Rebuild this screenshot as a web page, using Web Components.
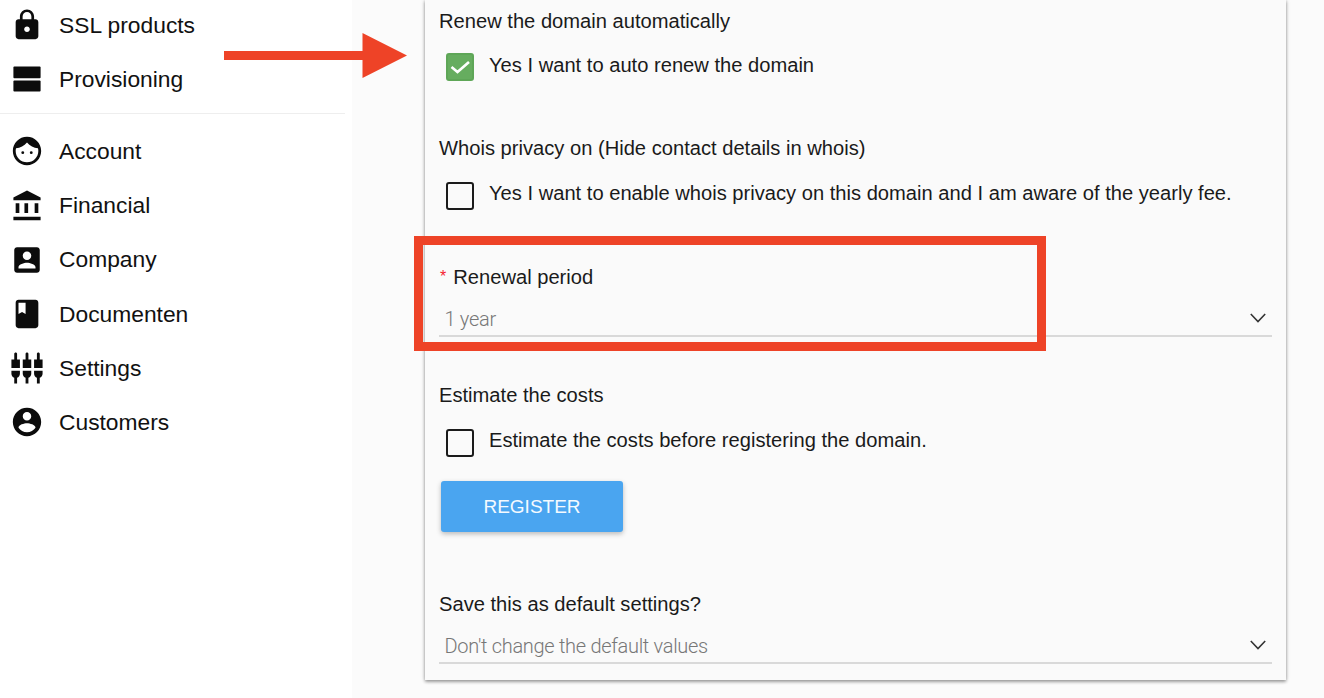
<!doctype html>
<html lang="en">
<head>
<meta charset="utf-8">
<title>Register domain</title>
<style>
  html, body { margin: 0; height: 100%; overflow: hidden; }
  body { background: #fbfbfb; color: #111; font-family: "Liberation Sans", Arial, sans-serif; }
</style>
</head>
<body>
<domain-page>
  <side-nav slot="nav">
    <nav-item icon="lock">SSL products</nav-item>
    <nav-item icon="storage">Provisioning</nav-item>
    <nav-rule></nav-rule>
    <nav-item icon="face">Account</nav-item>
    <nav-item icon="bank">Financial</nav-item>
    <nav-item icon="box">Company</nav-item>
    <nav-item icon="book">Documenten</nav-item>
    <nav-item icon="settings">Settings</nav-item>
    <nav-item icon="circle">Customers</nav-item>
  </side-nav>
  <form-card slot="main">
    <check-field style="--top:9px;--gap:20px;--lift:2px;--after:55px" label="Renew the domain automatically" checked>Yes I want to auto renew the domain</check-field>
    <check-field style="--after:55px" label="Whois privacy on (Hide contact details in whois)">Yes I want to enable whois privacy on this domain and I am aware of the yearly fee.</check-field>
    <select-field style="--after:46px" label="Renewal period" required>1 year</select-field>
    <check-field style="--after:24px" label="Estimate the costs">Estimate the costs before registering the domain.</check-field>
    <raised-button>REGISTER</raised-button>
    <select-field style="--before:60px" label="Save this as default settings?">Don't change the default values</select-field>
  </form-card>
  <note-arrow slot="notes"></note-arrow>
  <note-box slot="notes"></note-box>
</domain-page>

<script>
const ICONS = {
  lock: `<path d="M18 8h-1V6c0-2.76-2.24-5-5-5S7 3.24 7 6v2H6c-1.1 0-2 .9-2 2v10c0 1.1.9 2 2 2h12c1.1 0 2-.9 2-2V10c0-1.1-.9-2-2-2zm-6 9c-1.1 0-2-.9-2-2s.9-2 2-2 2 .9 2 2-.9 2-2 2zm3.1-9H8.9V6c0-1.71 1.39-3.1 3.1-3.1 1.71 0 3.1 1.39 3.1 3.1v2z"/>`,
  storage: `<rect x="2.4" y="3.2" width="19.2" height="8.3" rx=".7"/><rect x="2.4" y="13" width="19.2" height="7.8" rx=".7"/>`,
  face: `<path fill-rule="evenodd" d="M12 2C6.48 2 2 6.48 2 12s4.48 10 10 10 10-4.48 10-10S17.52 2 12 2zm0 18c-4.41 0-8-3.59-8-8 0-.7.09-1.4.27-2 2.9-.2 5.8-1.6 7.73-4 1.93 2.4 4.83 3.8 7.73 4 .18.6.27 1.3.27 2 0 4.41-3.59 8-8 8z"/><circle cx="9" cy="13.2" r="1"/><circle cx="15" cy="13.2" r="1"/>`,
  bank: `<path d="M4 10v7h2.6v-7H4zm6.2 0v7h2.6v-7h-2.6zM2.4 22h19.2v-2.4H2.400zM17.400 10v7H20v-7h-2.600zM12 1 2.400 6v2h19.200V6L12 1z"/>`,
  box: `<path d="M3 5v14c0 1.1.89 2 2 2h14c1.100 0 2-.9 2-2V5c0-1.100-.9-2-2-2H5c-1.110 0-2 .9-2 2zm12 4c0 1.660-1.340 3-3 3s-3-1.340-3-3 1.340-3 3-3 3 1.340 3 3zm-9 8c0-2 4-3.100 6-3.100s6 1.100 6 3.100v1H6v-1z"/>`,
  book: `<path d="M18 2H6c-1.100 0-2 .9-2 2v16c0 1.100.9 2 2 2h12c1.100 0 2-.9 2-2V4c0-1.100-.9-2-2-2zM6 4h5v8l-2.500-1.500L6 12V4z"/>`,
  settings: `<path d="M5 2c0-.55-.45-1-1-1s-1 .45-1 1v4H1v6h6V6H5V2zm4 14c0 1.300.84 2.400 2 2.820V23h2v-4.180c1.160-.41 2-1.510 2-2.820v-2H9v2zm-8 0c0 1.300.84 2.400 2 2.820V23h2v-4.180C6.160 18.400 7 17.300 7 16v-2H1v2zM21 6V2c0-.55-.45-1-1-1s-1 .45-1 1v4h-2v6h6V6h-2zm-8-4c0-.55-.45-1-1-1s-1 .45-1 1v4H9v6h6V6h-2V2zm4 14c0 1.300.84 2.400 2 2.820V23h2v-4.180c1.160-.41 2-1.510 2-2.820v-2h-6v2z"/>`,
  circle: `<path d="M12 2C6.480 2 2 6.480 2 12s4.480 10 10 10 10-4.480 10-10S17.520 2 12 2zm0 3c1.660 0 3 1.340 3 3s-1.340 3-3 3-3-1.340-3-3 1.340-3 3-3zm0 14.200c-2.500 0-4.710-1.280-6-3.220.03-1.990 4-3.080 6-3.080 1.990 0 5.970 1.090 6 3.080-1.290 1.940-3.500 3.220-6 3.220z"/>`,
};

// shorthand so each class below only has to say what is in its shadow root
class ShadowElement extends HTMLElement {
  constructor(html) {
    super();
    const template = document.createElement("template");
    template.innerHTML = html;
    this.attachShadow({ mode: "open" }).appendChild(template.content.cloneNode(true));
  }
}

class DomainPage extends ShadowElement {
  constructor() {
    super(`
      <style>
        :host { display: grid; grid-template-columns: 352px 1fr; height: 698px; position: relative; overflow: hidden; }
        .nav { background: #fff; }
        .main { padding-left: 73px; padding-right: 38px; }
      </style>
      <div class="nav"><slot name="nav"></slot></div>
      <div class="main"><slot name="main"></slot></div>
      <slot name="notes"></slot>
    `);
  }
}

class SideNav extends ShadowElement {
  constructor() {
    super(`
      <style>:host { display: block; margin-top: -2px; }</style>
      <slot></slot>
    `);
  }
}

class NavItem extends ShadowElement {
  constructor() {
    super(`
      <style>
        :host { display: flex; align-items: center; gap: 15.5px; height: 54.2px; padding-left: 9.5px;
                font-size: 22.8px; color: #111; }
        svg { width: 34px; height: 34px; flex: none; fill: #0c0c0c; }
      </style>
      <svg viewBox="0 0 24 24" aria-hidden="true"></svg>
      <span><slot></slot></span>
    `);
  }
  connectedCallback() {
    this.shadowRoot.querySelector("svg").innerHTML = ICONS[this.getAttribute("icon")];
  }
}

class NavRule extends ShadowElement {
  constructor() {
    super(`<style>:host { display: block; width: 345px; height: 1px; background: #eee; margin-top: 7px; margin-bottom: 10px; }</style>`);
  }
}

class FormCard extends ShadowElement {
  constructor() {
    super(`
      <style>
        :host { display: block; box-sizing: border-box; height: 680px; padding: 0 14px;
                background: #fafafa; box-shadow: 0 0 4px rgba(0,0,0,.25), 0 2px 3px rgba(0,0,0,.3); }
      </style>
      <slot></slot>
    `);
  }
}

class CheckField extends ShadowElement {
  constructor() {
    super(`
      <style>
        :host { display: block; padding-top: var(--top, 0); padding-bottom: var(--after, 0);
                font-size: 20.15px; line-height: 24px; color: #1a1a1a; }
        .row { display: flex; align-items: center; gap: 15px; margin-top: var(--gap, 22px); padding-left: 7px; }
        .box { box-sizing: border-box; width: 28px; height: 28px; flex: none; border: 2px solid #1b1b1b;
               border-radius: 3px; }
        :host([checked]) .box { background: #66ad5f; border-color: #5ea657; }
        .box svg { display: none; width: 24px; height: 24px; }
        :host([checked]) .box svg { display: block; }
        .text { position: relative; top: calc(var(--lift, 3px) * -1); }
      </style>
      <div class="label"></div>
      <div class="row">
        <span class="box"><svg viewBox="0 0 24 24"><path d="M3.500 12 9.500 17 21 7" fill="none" stroke="#fff" stroke-width="2.600"/></svg></span>
        <span class="text"><slot></slot></span>
      </div>
    `);
  }
  connectedCallback() {
    this.shadowRoot.querySelector(".label").textContent = this.getAttribute("label");
  }
}

class SelectField extends ShadowElement {
  constructor() {
    super(`
      <style>
        :host { display: block; padding-top: var(--before, 0); padding-bottom: var(--after, 0);
                font-size: 20.15px; line-height: 24px; color: #1a1a1a; }
        .star { display: none; color: #f5222d; font-size: 16px; margin-right: 7px; vertical-align: 2px; margin-left: 1px; }
        :host([required]) .star { display: inline; }
        .control { display: flex; align-items: center; justify-content: space-between; height: 43px;
                   box-sizing: border-box; padding: 9px 6px 0 5.5px; border-bottom: 2px solid #d9d9d9; margin-top: 5px;
                   color: #777; font-family: Roboto, "Liberation Sans", sans-serif; font-weight: 300; font-size: 20px;
                   letter-spacing: -.3px; }
        svg { width: 16px; height: 10px; fill: none; stroke: #333; stroke-width: 1.600; position: relative; top: -1px; }
      </style>
      <div><span class="star">*</span><span class="label"></span></div>
      <div class="control">
        <span><slot></slot></span>
        <svg viewBox="0 0 16 10" aria-hidden="true"><path d="M.8 1 8 8.500 15.200 1"/></svg>
      </div>
    `);
  }
  connectedCallback() {
    this.shadowRoot.querySelector(".label").textContent = this.getAttribute("label");
  }
}

class RaisedButton extends ShadowElement {
  constructor() {
    super(`
      <style>
        :host { display: block; width: 182px; margin-left: 2px; }
        button { display: block; width: 100%; height: 51px; border: 0; border-radius: 3px; padding: 0;
                 background: #4aa5f0; color: #f4faff; font: 19px "Liberation Sans", Arial, sans-serif;
                 box-shadow: 0 2px 5px rgba(0,0,0,.26); }
      </style>
      <button type="button"><slot></slot></button>
    `);
  }
}

class NoteArrow extends ShadowElement {
  constructor() {
    super(`
      <style>
        :host { position: absolute; left: 224px; top: 33px; width: 183px; height: 45px; }
        svg { display: block; }
      </style>
      <svg width="183" height="45" viewBox="0 0 183 45" aria-hidden="true">
        <path fill="#ee4327" d="M0 18h138.500V0L183 22.500 138.500 45V27H0z"/>
      </svg>
    `);
  }
}

class NoteBox extends ShadowElement {
  constructor() {
    super(`
      <style>
        :host { position: absolute; left: 414px; top: 236px; width: 632px; height: 115px;
                box-sizing: border-box; border: 9px solid #ee4327; }
      </style>
    `);
  }
}

customElements.define("domain-page", DomainPage);
customElements.define("side-nav", SideNav);
customElements.define("nav-item", NavItem);
customElements.define("nav-rule", NavRule);
customElements.define("form-card", FormCard);
customElements.define("check-field", CheckField);
customElements.define("select-field", SelectField);
customElements.define("raised-button", RaisedButton);
customElements.define("note-arrow", NoteArrow);
customElements.define("note-box", NoteBox);
</script>
</body>
</html>
